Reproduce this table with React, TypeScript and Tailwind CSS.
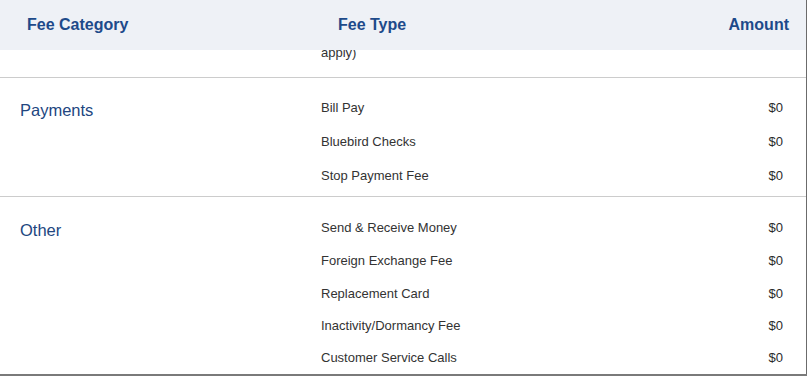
import React from "react";

type Section = {
  category: string;
  catPad: string;
  pad: string;
  items: { label: string; amount: string; h: string }[];
};

const sections: Section[] = [
  {
    category: "Payments",
    catPad: "pt-[2px]",
    pad: "pt-[13px] pb-[3px]",
    items: [
      { label: "Bill Pay", amount: "$0", h: "h-[34px]" },
      { label: "Bluebird Checks", amount: "$0", h: "h-[34px]" },
      { label: "Stop Payment Fee", amount: "$0", h: "h-[34px]" },
    ],
  },
  {
    category: "Other",
    catPad: "pt-[2px]",
    pad: "pt-[14px]",
    items: [
      { label: "Send & Receive Money", amount: "$0", h: "h-[33px]" },
      { label: "Foreign Exchange Fee", amount: "$0", h: "h-[34px]" },
      { label: "Replacement Card", amount: "$0", h: "h-[32px]" },
      { label: "Inactivity/Dormancy Fee", amount: "$0", h: "h-[32px]" },
      { label: "Customer Service Calls", amount: "$0", h: "h-[32px]" },
    ],
  },
];

const font = { fontFamily: '"Liberation Sans", Arial, Helvetica, sans-serif' };

export default function App() {
  return (
    <div className="w-[808px] h-[376px] bg-white overflow-hidden relative" style={font}>
      <div className="w-[807px] h-[376px] border-r border-[#6b6b6b] flex flex-col overflow-hidden">
        {/* column headings */}
        <div className="h-[50px] shrink-0 bg-[#eef1f6] flex items-center text-[16px] font-bold text-[#1d4a8a] relative z-10">
          <div className="w-[338px] pl-[27px]">Fee Category</div>
          <div className="flex-1">Fee Type</div>
          <div className="pr-[17px]">Amount</div>
        </div>

        {/* tail of the previous row, scrolled under the heading */}
        <div className="h-[28px] shrink-0 border-b border-[#cccccc] overflow-hidden">
          <div className="pl-[321px] mt-[-5px] text-[13px] leading-[16px] text-[#333333]">
            apply)
          </div>
        </div>

        {sections.map((s, i) => (
          <div
            key={s.category}
            className={`flex shrink-0 ${s.pad} ${i === 0 ? "border-b border-[#cccccc]" : ""}`}
          >
            <div className={`w-[321px] pl-[20px] shrink-0 ${s.catPad}`}>
              <div className="h-[34px] flex items-center text-[16.5px] text-[#22467f]">
                {s.category}
              </div>
            </div>
            <div className="flex-1 flex flex-col">
              {s.items.map((it) => (
                <div
                  key={it.label}
                  className={`${it.h} flex items-center text-[13px] text-[#333333]`}
                >
                  <div className="flex-1">{it.label}</div>
                  <div className="pr-[23px] text-[#2b2b2b]">{it.amount}</div>
                </div>
              ))}
            </div>
          </div>
        ))}
      </div>
      {/* lower edge of the panel */}
      <div className="absolute left-0 bottom-0 w-[807px] h-[2px] bg-[#7a7a7a]" />
    </div>
  );
}
